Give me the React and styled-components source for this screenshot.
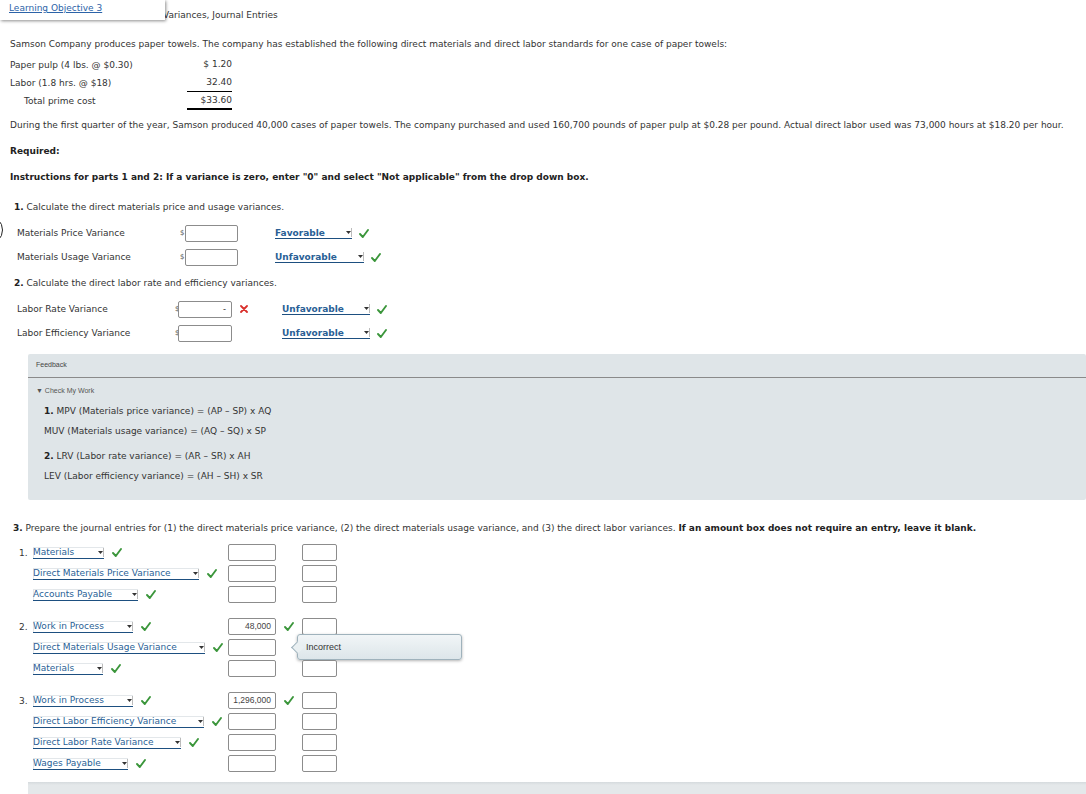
import React from 'react'
import styled, { createGlobalStyle } from 'styled-components'

const GlobalStyle = createGlobalStyle`
  body {
    margin: 0;
    background: #fff;
    font-family: "DejaVu Sans", Verdana, sans-serif;
    font-size: 9px;
    color: #333;
  }
`

const Check = () => (
    <svg width="10" height="9" viewBox="0 0 10 9">
        <path d="M1 5 L3.8 8 L9 1" fill="none" stroke="#3b963b" strokeWidth="1.9" strokeLinecap="round" strokeLinejoin="round" />
    </svg>
)

const Cross = () => (
    <svg width="8" height="8" viewBox="0 0 8 8">
        <path d="M1 1 L7 7 M7 1 L1 7" stroke="#d9302c" strokeWidth="1.8" strokeLinecap="round" />
    </svg>
)

const Select = ({ label, width, bold }) => (
    <SelectBox width={width} bold={bold}>
        <span>{label}</span>
        <Arrow>
            <svg width="5" height="3" viewBox="0 0 5 3"><path d="M0 0 H5 L2.5 3 Z" fill="#333" /></svg>
        </Arrow>
    </SelectBox>
)

const journal = [
    [
        { acct: 'Materials', w: 71 },
        { acct: 'Direct Materials Price Variance', w: 166 },
        { acct: 'Accounts Payable', w: 105 },
    ],
    [
        { acct: 'Work in Process', w: 100, value: '48,000' },
        { acct: 'Direct Materials Usage Variance', w: 172, tip: true },
        { acct: 'Materials', w: 70 },
    ],
    [
        { acct: 'Work in Process', w: 100, value: '1,296,000' },
        { acct: 'Direct Labor Efficiency Variance', w: 171 },
        { acct: 'Direct Labor Rate Variance', w: 148 },
        { acct: 'Wages Payable', w: 95 },
    ],
]

const App = () => {
    return (
        <Page>
            <GlobalStyle />
            <Radio />
            <Header>
                <Tab><TabLink>Learning Objective 3</TabLink></Tab>
                <Title>Variances, Journal Entries</Title>
            </Header>

            <Body>
                <Para top={17}>
                    Samson Company produces paper towels. The company has established the following direct materials and direct labor standards for one case of paper towels:
                </Para>

                <CostTable>
                    <CostLabel>Paper pulp (4 lbs. @ $0.30)</CostLabel>
                    <CostAmt>$ 1.20</CostAmt>
                    <CostLabel>Labor (1.8 hrs. @ $18)</CostLabel>
                    <CostAmt line="1px">32.40</CostAmt>
                    <CostLabel indent={14}>Total prime cost</CostLabel>
                    <CostAmt line="2px">$33.60</CostAmt>
                </CostTable>

                <Para top={9}>
                    During the first quarter of the year, Samson produced 40,000 cases of paper towels. The company purchased and used 160,700 pounds of paper pulp at $0.28 per pound. Actual direct labor used was 73,000 hours at $18.20 per hour.
                </Para>
                <Para top={14}><b>Required:</b></Para>
                <Para top={14}><b>Instructions for parts 1 and 2: If a variance is zero, enter "0" and select "Not applicable" from the drop down box.</b></Para>

                <Question top={18}><b>1.</b> Calculate the direct materials price and usage variances.</Question>
                <VarTable top={8}>
                    <VarRow cols="163px 5px 53px 37px auto">
                        <span>Materials Price Variance</span>
                        <Dollar>$</Dollar>
                        <AmountBox />
                        <span />
                        <Choice><Select label="Favorable" width={77} bold /><Check /></Choice>
                    </VarRow>
                    <VarRow cols="163px 5px 53px 37px auto">
                        <span>Materials Usage Variance</span>
                        <Dollar>$</Dollar>
                        <AmountBox />
                        <span />
                        <Choice><Select label="Unfavorable" width={89} bold /><Check /></Choice>
                    </VarRow>
                </VarTable>

                <Question top={8}><b>2.</b> Calculate the direct labor rate and efficiency variances.</Question>
                <VarTable top={8}>
                    <VarRow cols="158px 3px 54px 50px auto">
                        <span>Labor Rate Variance</span>
                        <Dollar>$</Dollar>
                        <AmountBox align="right">-</AmountBox>
                        <Mark><Cross /></Mark>
                        <Choice><Select label="Unfavorable" width={88} bold /><Check /></Choice>
                    </VarRow>
                    <VarRow cols="158px 3px 54px 50px auto">
                        <span>Labor Efficiency Variance</span>
                        <Dollar>$</Dollar>
                        <AmountBox />
                        <span />
                        <Choice><Select label="Unfavorable" width={88} bold /><Check /></Choice>
                    </VarRow>
                </VarTable>

                <Feedback>
                    <FbHead>Feedback</FbHead>
                    <CheckWork>▼ Check My Work</CheckWork>
                    <Formulas top={4}>
                        <div><b>1.</b> MPV (Materials price variance) = (AP – SP) x AQ</div>
                        <div>MUV (Materials usage variance) = (AQ – SQ) x SP</div>
                    </Formulas>
                    <Formulas top={5}>
                        <div><b>2.</b> LRV (Labor rate variance) = (AR – SR) x AH</div>
                        <div>LEV (Labor efficiency variance) = (AH – SH) x SR</div>
                    </Formulas>
                </Feedback>

                <Question top={22} left={3}>
                    <b>3.</b> Prepare the journal entries for (1) the direct materials price variance, (2) the direct materials usage variance, and (3) the direct labor variances. <b>If an amount box does not require an entry, leave it blank.</b>
                </Question>

                <Journal>
                    {journal.map((entry, i) => (
                        <Entry key={i}>
                            {entry.map((row, j) => (
                                <JRow key={j}>
                                    <span>{j === 0 ? `${i + 1}.` : ''}</span>
                                    <Account>
                                        <Select label={row.acct} width={row.w} />
                                        <Check />
                                    </Account>
                                    <JInput>{row.value}</JInput>
                                    <Mark>{row.value ? <Check /> : null}</Mark>
                                    <JInput />
                                    {row.tip && <Tooltip>Incorrect</Tooltip>}
                                </JRow>
                            ))}
                        </Entry>
                    ))}
                </Journal>

                <BottomBar />
            </Body>
        </Page>
    )
}

export default App

const Page = styled.div`
    position: relative;
    height: 794px;
    overflow: hidden;
`

const Radio = styled.div`
    position: absolute;
    left: -27px;
    top: 215px;
    width: 30px;
    height: 30px;
    box-sizing: border-box;
    border: 1.5px solid #222;
    border-radius: 50%;
`

const Header = styled.div`
    display: flex;
    align-items: flex-start;
    height: 21px;
`

const Tab = styled.div`
    position: relative;
    z-index: 1;
    width: 165px;
    height: 20px;
    box-sizing: border-box;
    padding: 2px 0 0 9px;
    background: #fff;
    box-shadow: 1px 1px 3px rgba(0, 0, 0, 0.45);
`

const TabLink = styled.a`
    color: #2c63a8;
    text-decoration: underline;
    line-height: 12px;
`

const Title = styled.div`
    margin: 9px 0 0 -2px;
    line-height: 12px;
`

const Body = styled.div`
    padding: 0 10px;
`

const Para = styled.p`
    margin: ${p => p.top}px 0 0;
    line-height: 12px;
    b { color: #222; }
`

const CostTable = styled.div`
    display: grid;
    grid-template-columns: 177px 45px;
    margin-top: 6px;
`

const CostLabel = styled.div`
    height: 18px;
    line-height: 18px;
    padding-left: ${p => p.indent || 0}px;
`

const CostAmt = styled.div`
    height: 18px;
    box-sizing: border-box;
    line-height: 17px;
    text-align: right;
    border-bottom: ${p => p.line || '0'} solid #000;
`

const Question = styled.div`
    margin: ${p => p.top}px 0 0 ${p => (p.left === undefined ? 4 : p.left)}px;
    line-height: 12px;
    b { color: #222; }
`

const VarTable = styled.div`
    margin-top: ${p => p.top}px;
    padding-left: 7px;
`

const VarRow = styled.div`
    display: grid;
    grid-template-columns: ${p => p.cols};
    align-items: center;
    height: 24px;
`

const Dollar = styled.span`
    font-size: 7px;
    color: #555;
    overflow: visible;
    white-space: nowrap;
`

const AmountBox = styled.div`
    height: 17px;
    box-sizing: border-box;
    border: 1px solid #8c8c8c;
    border-radius: 2px;
    background: #fff;
    text-align: ${p => p.align || 'left'};
    padding: 0 5px;
    line-height: 15px;
    font-family: "Liberation Sans", Arial, sans-serif;
    font-size: 9px;
`

const Mark = styled.span`
    display: flex;
    align-items: center;
    padding-left: 8px;
`

const Choice = styled.div`
    display: flex;
    align-items: center;
    gap: 7px;
`

const SelectBox = styled.div`
    display: inline-flex;
    align-items: center;
    justify-content: space-between;
    width: ${p => p.width}px;
    height: 12px;
    box-sizing: border-box;
    border-bottom: 1px solid #1d4f80;
    color: #2a5f96;
    font-weight: ${p => (p.bold ? 'bold' : 'normal')};
    line-height: 12px;
    white-space: nowrap;
    ${p => !p.bold && 'box-shadow: inset 1px 1px 0 #e3e7ea;'}
`

const Arrow = styled.span`
    display: flex;
    align-items: center;
    justify-content: center;
    width: 6px;
    height: 9px;
    border-right: 1px solid #bbb;
`

const Feedback = styled.div`
    margin: 9px -10px 0 18px;
    height: 146px;
    background: #dfe5e8;
    border-radius: 2px;
`

const FbHead = styled.div`
    height: 24px;
    box-sizing: border-box;
    padding: 5px 0 0 8px;
    line-height: 12px;
    border-bottom: 1px solid #8a8a8a;
    font-family: "Liberation Sans", Arial, sans-serif;
    font-size: 7px;
    color: #444;
`

const CheckWork = styled.div`
    margin-top: 7px;
    padding-left: 8px;
    line-height: 12px;
    font-family: "Liberation Sans", Arial, sans-serif;
    font-size: 7px;
    color: #555;
`

const Formulas = styled.div`
    margin-top: ${p => p.top}px;
    padding-left: 16px;
    line-height: 20px;
    b { color: #222; }
`

const Journal = styled.div`
    margin-top: 8px;
`

const Entry = styled.div`
    & + & { margin-top: 11px; }
`

const JRow = styled.div`
    position: relative;
    display: grid;
    grid-template-columns: 14px 195px 48px 26px 35px;
    align-items: center;
    height: 21px;
    padding-left: 9px;
`

const Account = styled.div`
    display: flex;
    align-items: center;
    gap: 8px;
`

const JInput = styled.div`
    height: 17px;
    box-sizing: border-box;
    border: 1px solid #8c8c8c;
    border-radius: 2px;
    background: #fff;
    text-align: right;
    padding-right: 4px;
    line-height: 15px;
    font-family: "Liberation Sans", Arial, sans-serif;
    font-size: 8.5px;
    color: #444;
`

const Tooltip = styled.div`
    position: absolute;
    left: 287px;
    top: -3px;
    width: 165px;
    height: 26px;
    box-sizing: border-box;
    padding-left: 8px;
    line-height: 24px;
    border: 1px solid #9fb2bc;
    border-radius: 3px;
    background: linear-gradient(#f1f5f7, #dde6ea);
    box-shadow: 0 1px 3px rgba(0, 0, 0, 0.3);
    font-family: "Liberation Sans", Arial, sans-serif;
    font-size: 9px;
    color: #333;

    &::before {
        content: '';
        position: absolute;
        left: -5px;
        top: 8px;
        width: 8px;
        height: 8px;
        background: #eaf0f2;
        border-left: 1px solid #9fb2bc;
        border-bottom: 1px solid #9fb2bc;
        transform: rotate(45deg);
    }
`

const BottomBar = styled.div`
    margin: 8px -10px 0 18px;
    height: 14px;
    background: linear-gradient(#d5dadd, #e4e8ea 3px);
`
